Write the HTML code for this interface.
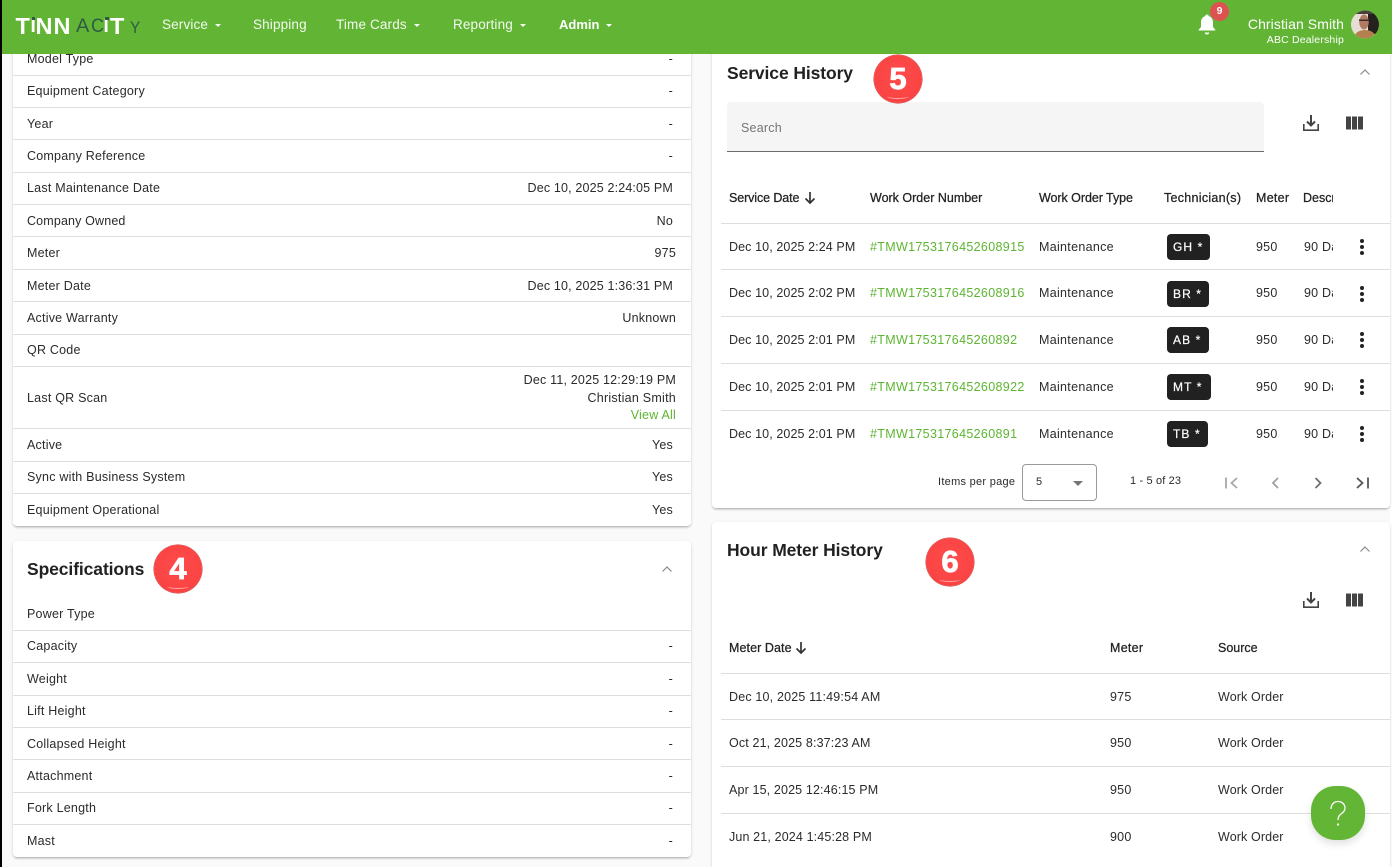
<!DOCTYPE html>
<html lang="en"><head><meta charset="utf-8"><title>Equipment</title>
<style>
*{box-sizing:border-box}
html,body{margin:0;padding:0;width:1392px;height:867px;overflow:hidden}
body{position:relative;background:#fafafa;font-family:"Liberation Sans",Arial,sans-serif;color:#2b2b2b;font-size:12.5px;letter-spacing:.22px}
.a,.t,.r{position:absolute}
.t,.r{white-space:nowrap;line-height:16px;height:16px}
.r{text-align:right}
.d{letter-spacing:.1px}
.e{letter-spacing:.16px}
.w{letter-spacing:.33px}
.m{letter-spacing:.3px}
.card{position:absolute;background:#fff;border-radius:4px;box-shadow:0 2px 2px -1px rgba(0,0,0,.25),0 1px 3px rgba(0,0,0,.12)}
.l{position:absolute;height:1px;background:#dedede}
.nav{position:absolute;top:16px;color:#fff;font-size:13.5px;line-height:17px;white-space:nowrap;letter-spacing:.15px;opacity:.93}
.nav i{display:inline-block;width:0;height:0;border:3px solid transparent;border-top:3px solid #fff;border-bottom:0;margin-left:7px;vertical-align:2px}
.h{font-size:17.5px;font-weight:bold;color:#212121;letter-spacing:-.1px;line-height:22px;height:22px;position:absolute;white-space:nowrap}
.b{color:#222;-webkit-text-stroke:.25px #222;letter-spacing:.28px}
.g{color:#5cb531}
.chip{position:absolute;left:1167px;height:26px;background:#212121;color:#fff;border-radius:4px;font-size:12px;letter-spacing:1.1px;line-height:27px;padding-left:6px;white-space:nowrap;-webkit-text-stroke:.2px #fff}
.dot{position:absolute;left:1359.5px;width:4px;height:4px;border-radius:50%;background:#222}
.num{position:absolute;width:48px;height:48px;border-radius:50%;background:radial-gradient(circle at 50% 45%,#ff4b4b 0,#fa4444 70%,#e83a3a 100%);box-shadow:0 0 0 .5px #c93434;color:#fff;font-weight:bold;font-size:31px;-webkit-text-stroke:.8px #fff;text-align:center;line-height:47px;letter-spacing:0}
.num:after{content:"";position:absolute;left:13px;bottom:4px;width:22px;height:4px;border-bottom:1.5px solid rgba(255,255,255,.55);border-radius:0 0 50% 50%}
.lg{position:absolute;height:24px;line-height:24px;white-space:nowrap;letter-spacing:0;color:#fff;font-weight:bold;font-size:23.5px}
.ld{color:#2f5a46;font-weight:normal;transform-origin:0 50%}
svg{position:absolute;display:block}
</style></head><body>

<!-- left black strip -->
<div class="a" style="left:0;top:0;width:2px;height:867px;background:#000"></div>
<div class="a" style="left:1390px;top:54px;width:2px;height:813px;background:#fff"></div>

<!-- Left details card -->
<div class="card" style="left:13px;top:40px;width:678px;height:486px"></div>
<div class="l" style="left:13px;top:75px;width:678px"></div>
<div class="l" style="left:13px;top:107px;width:678px"></div>
<div class="l" style="left:13px;top:139px;width:678px"></div>
<div class="l" style="left:13px;top:172px;width:678px"></div>
<div class="l" style="left:13px;top:204px;width:678px"></div>
<div class="l" style="left:13px;top:236px;width:678px"></div>
<div class="l" style="left:13px;top:269px;width:678px"></div>
<div class="l" style="left:13px;top:301px;width:678px"></div>
<div class="l" style="left:13px;top:334px;width:678px"></div>
<div class="l" style="left:13px;top:366px;width:678px"></div>
<div class="l" style="left:13px;top:428px;width:678px"></div>
<div class="l" style="left:13px;top:461px;width:678px"></div>
<div class="l" style="left:13px;top:493px;width:678px"></div>

<div class="t" style="left:27px;top:51px">Model Type</div><div class="r" style="right:719px;top:51px">-</div>
<div class="t" style="left:27px;top:83px">Equipment Category</div><div class="r" style="right:719px;top:83px">-</div>
<div class="t" style="left:27px;top:116px">Year</div><div class="r" style="right:719px;top:116px">-</div>
<div class="t" style="left:27px;top:148px">Company Reference</div><div class="r" style="right:719px;top:148px">-</div>
<div class="t" style="left:27px;top:180px">Last Maintenance Date</div><div class="r e" style="right:719px;top:180px">Dec 10, 2025 2:24:05 PM</div>
<div class="t" style="left:27px;top:213px;letter-spacing:.15px">Company Owned</div><div class="r" style="right:719px;top:213px">No</div>
<div class="t" style="left:27px;top:245px">Meter</div><div class="r" style="right:716px;top:245px">975</div>
<div class="t" style="left:27px;top:278px">Meter Date</div><div class="r e" style="right:719px;top:278px">Dec 10, 2025 1:36:31 PM</div>
<div class="t" style="left:27px;top:310px">Active Warranty</div><div class="r" style="right:716px;top:310px">Unknown</div>
<div class="t" style="left:27px;top:342px">QR Code</div>
<div class="t" style="left:27px;top:390px">Last QR Scan</div>
<div class="r" style="right:716px;top:372px;letter-spacing:.19px">Dec 11, 2025 12:29:19 PM</div>
<div class="r" style="right:716px;top:390px;letter-spacing:.25px">Christian Smith</div>
<div class="r g" style="right:716px;top:407px">View All</div>
<div class="t" style="left:27px;top:437px">Active</div><div class="r" style="right:719px;top:437px">Yes</div>
<div class="t" style="left:27px;top:469px">Sync with Business System</div><div class="r" style="right:719px;top:469px">Yes</div>
<div class="t" style="left:27px;top:502px">Equipment Operational</div><div class="r" style="right:719px;top:502px">Yes</div>

<!-- Specifications card -->
<div class="card" style="left:13px;top:541px;width:678px;height:316px"></div>
<div class="h" style="left:27px;top:558px">Specifications</div>
<div class="num" style="left:154px;top:545px">4</div>
<svg style="left:660px;top:562px" width="14" height="14" viewBox="0 0 14 14"><path d="M2.5 9.5 7 5l4.500 4.500" fill="none" stroke="#8a8a8a" stroke-width="1.200"/></svg>
<div class="l" style="left:13px;top:630px;width:678px"></div>
<div class="l" style="left:13px;top:662px;width:678px"></div>
<div class="l" style="left:13px;top:695px;width:678px"></div>
<div class="l" style="left:13px;top:727px;width:678px"></div>
<div class="l" style="left:13px;top:759px;width:678px"></div>
<div class="l" style="left:13px;top:792px;width:678px"></div>
<div class="l" style="left:13px;top:824px;width:678px"></div>
<div class="t" style="left:27px;top:606px">Power Type</div>
<div class="t" style="left:27px;top:638px">Capacity</div><div class="r" style="right:719px;top:638px">-</div>
<div class="t" style="left:27px;top:671px">Weight</div><div class="r" style="right:719px;top:671px">-</div>
<div class="t" style="left:27px;top:703px">Lift Height</div><div class="r" style="right:719px;top:703px">-</div>
<div class="t" style="left:27px;top:736px">Collapsed Height</div><div class="r" style="right:719px;top:736px">-</div>
<div class="t" style="left:27px;top:768px">Attachment</div><div class="r" style="right:719px;top:768px">-</div>
<div class="t" style="left:27px;top:800px">Fork Length</div><div class="r" style="right:719px;top:800px">-</div>
<div class="t" style="left:27px;top:833px">Mast</div><div class="r" style="right:719px;top:833px">-</div>

<!-- Service History card -->
<div class="card" style="left:712px;top:40px;width:678px;height:468px"></div>
<div class="h" style="left:727px;top:62px">Service History</div>
<div class="a" style="left:727px;top:102px;width:537px;height:50px;background:#f5f5f5;border-radius:4px 4px 0 0;border-bottom:1px solid #6b6b6b"></div>
<div class="num" style="left:874px;top:55px">5</div>
<svg style="left:1358px;top:65px" width="14" height="14" viewBox="0 0 14 14"><path d="M2.5 9.500 7 5l4.500 4.500" fill="none" stroke="#8a8a8a" stroke-width="1.200"/></svg>
<div class="t" style="left:741px;top:120px;color:#757575">Search</div>
<svg style="left:1301px;top:113px" width="20" height="20" viewBox="0 0 20 20"><path d="M10 2v10.500M6 8.500l4 4 4-4" fill="none" stroke="#444" stroke-width="2"/><path d="M2.800 11v6.200h14.400V11" fill="none" stroke="#444" stroke-width="1.600"/></svg>
<svg style="left:1346px;top:116px" width="17" height="14" viewBox="0 0 17 14"><path d="M0 .5h5v13H0zM6 .5h5v13H6zM12 .5h5v13h-5z" fill="#444"/></svg>

<div class="t b" style="left:729px;top:190px;letter-spacing:-.1px">Service Date</div>
<svg style="left:803px;top:190px" width="14" height="16" viewBox="0 0 14 16"><path d="M7 2v11M2.500 8.500 7 13l4.500-4.500" fill="none" stroke="#333" stroke-width="1.700"/></svg>
<div class="t b" style="left:870px;top:190px;letter-spacing:0">Work Order Number</div>
<div class="t b" style="left:1039px;top:190px;letter-spacing:-.05px">Work Order Type</div>
<div class="t b" style="left:1164px;top:190px">Technician(s)</div>
<div class="t b" style="left:1256px;top:190px">Meter</div>
<div class="t b" style="left:1303px;top:190px;width:30px;overflow:hidden;letter-spacing:0">Description</div>
<div class="l" style="left:721px;top:223px;width:669px"></div>
<div class="l" style="left:721px;top:269px;width:669px"></div>
<div class="l" style="left:721px;top:316px;width:669px"></div>
<div class="l" style="left:721px;top:363px;width:669px"></div>
<div class="l" style="left:721px;top:410px;width:669px"></div>

<div class="t d" style="left:729px;top:239px">Dec 10, 2025 2:24 PM</div><div class="t g w" style="left:870px;top:239px">#TMW1753176452608915</div><div class="t m" style="left:1039px;top:239px">Maintenance</div><div class="chip" style="top:234px;width:43px">GH *</div><div class="t" style="left:1256px;top:239px">950</div><div class="t" style="left:1304px;top:239px;width:29px;overflow:hidden">90 Day</div>
<div class="t d" style="left:729px;top:285px">Dec 10, 2025 2:02 PM</div><div class="t g w" style="left:870px;top:285px">#TMW1753176452608916</div><div class="t m" style="left:1039px;top:285px">Maintenance</div><div class="chip" style="top:281px;width:42px">BR *</div><div class="t" style="left:1256px;top:285px">950</div><div class="t" style="left:1304px;top:285px;width:29px;overflow:hidden">90 Day</div>
<div class="t d" style="left:729px;top:332px">Dec 10, 2025 2:01 PM</div><div class="t g w" style="left:870px;top:332px">#TMW175317645260892</div><div class="t m" style="left:1039px;top:332px">Maintenance</div><div class="chip" style="top:327px;width:42px">AB *</div><div class="t" style="left:1256px;top:332px">950</div><div class="t" style="left:1304px;top:332px;width:29px;overflow:hidden">90 Day</div>
<div class="t d" style="left:729px;top:379px">Dec 10, 2025 2:01 PM</div><div class="t g w" style="left:870px;top:379px">#TMW1753176452608922</div><div class="t m" style="left:1039px;top:379px">Maintenance</div><div class="chip" style="top:374px;width:44px">MT *</div><div class="t" style="left:1256px;top:379px">950</div><div class="t" style="left:1304px;top:379px;width:29px;overflow:hidden">90 Day</div>
<div class="t d" style="left:729px;top:426px">Dec 10, 2025 2:01 PM</div><div class="t g w" style="left:870px;top:426px">#TMW175317645260891</div><div class="t m" style="left:1039px;top:426px">Maintenance</div><div class="chip" style="top:421px;width:41px">TB *</div><div class="t" style="left:1256px;top:426px">950</div><div class="t" style="left:1304px;top:426px;width:29px;overflow:hidden">90 Day</div>

<div class="dot" style="top:239px"></div><div class="dot" style="top:245px"></div><div class="dot" style="top:250.500px"></div>
<div class="dot" style="top:286px"></div><div class="dot" style="top:292px"></div><div class="dot" style="top:297.500px"></div>
<div class="dot" style="top:332px"></div><div class="dot" style="top:338px"></div><div class="dot" style="top:343.500px"></div>
<div class="dot" style="top:379px"></div><div class="dot" style="top:385px"></div><div class="dot" style="top:390.500px"></div>
<div class="dot" style="top:426px"></div><div class="dot" style="top:432px"></div><div class="dot" style="top:437.500px"></div>

<div class="t" style="left:938px;top:474px;font-size:11px;letter-spacing:.28px">Items per page</div>
<div class="a" style="left:1022px;top:464px;width:75px;height:37px;border:1px solid #9a9a9a;border-radius:4px"></div>
<div class="t" style="left:1036px;top:474px;font-size:11px">5</div>
<div class="a" style="left:1073px;top:481px;width:0;height:0;border:5px solid transparent;border-top:5px solid #757575;border-bottom:0"></div>
<div class="t" style="left:1130px;top:473px;font-size:11px;letter-spacing:.15px">1 - 5 of 23</div>
<svg style="left:1224px;top:475px" width="16" height="16" viewBox="0 0 16 16"><path d="M2 2.500v11M13 3 7.500 8l5.500 5" fill="none" stroke="#a8a8a8" stroke-width="1.800"/></svg>
<svg style="left:1267px;top:475px" width="16" height="16" viewBox="0 0 16 16"><path d="M11 3 6 8l5 5" fill="none" stroke="#a0a0a0" stroke-width="1.800"/></svg>
<svg style="left:1310px;top:475px" width="16" height="16" viewBox="0 0 16 16"><path d="M5.500 3l5 5-5 5" fill="none" stroke="#707070" stroke-width="1.800"/></svg>
<svg style="left:1354px;top:475px" width="16" height="16" viewBox="0 0 16 16"><path d="M14 2.500v11M3 3l5.500 5L3 13" fill="none" stroke="#555" stroke-width="1.800"/></svg>

<!-- Hour Meter History card -->
<div class="card" style="left:712px;top:522px;width:678px;height:345px;border-radius:4px 4px 0 0"></div>
<div class="h" style="left:727px;top:539px">Hour Meter History</div>
<div class="num" style="left:926px;top:538px">6</div>
<svg style="left:1358px;top:542px" width="14" height="14" viewBox="0 0 14 14"><path d="M2.500 9.500 7 5l4.500 4.500" fill="none" stroke="#8a8a8a" stroke-width="1.200"/></svg>
<svg style="left:1301px;top:590px" width="20" height="20" viewBox="0 0 20 20"><path d="M10 2v10.500M6 8.500l4 4 4-4" fill="none" stroke="#444" stroke-width="2"/><path d="M2.800 11v6.200h14.400V11" fill="none" stroke="#444" stroke-width="1.600"/></svg>
<svg style="left:1346px;top:593px" width="17" height="14" viewBox="0 0 17 14"><path d="M0 .5h5v13H0zM6 .5h5v13H6zM12 .5h5v13h-5z" fill="#444"/></svg>
<div class="t b" style="left:729px;top:640px;letter-spacing:.08px">Meter Date</div>
<svg style="left:794px;top:640px" width="14" height="16" viewBox="0 0 14 16"><path d="M7 2v11M2.500 8.500 7 13l4.500-4.500" fill="none" stroke="#333" stroke-width="1.700"/></svg>
<div class="t b" style="left:1110px;top:640px">Meter</div>
<div class="t b" style="left:1218px;top:640px;letter-spacing:0">Source</div>
<div class="l" style="left:721px;top:673px;width:669px"></div>
<div class="l" style="left:721px;top:719px;width:669px"></div>
<div class="l" style="left:721px;top:766px;width:669px"></div>
<div class="l" style="left:721px;top:813px;width:669px"></div>
<div class="t" style="left:729px;top:689px;letter-spacing:.18px">Dec 10, 2025 11:49:54 AM</div><div class="t" style="left:1110px;top:689px">975</div><div class="t" style="left:1218px;top:689px;letter-spacing:.12px">Work Order</div>
<div class="t" style="left:729px;top:735px;letter-spacing:.14px">Oct 21, 2025 8:37:23 AM</div><div class="t" style="left:1110px;top:735px">950</div><div class="t" style="left:1218px;top:735px;letter-spacing:.12px">Work Order</div>
<div class="t" style="left:729px;top:782px;letter-spacing:.14px">Apr 15, 2025 12:46:15 PM</div><div class="t" style="left:1110px;top:782px">950</div><div class="t" style="left:1218px;top:782px;letter-spacing:.12px">Work Order</div>
<div class="t" style="left:729px;top:829px;letter-spacing:.14px">Jun 21, 2024 1:45:28 PM</div><div class="t" style="left:1110px;top:829px">900</div><div class="t" style="left:1218px;top:829px;letter-spacing:.12px">Work Order</div>

<!-- FAB -->
<div class="a" style="left:1311px;top:786px;width:54px;height:54px;background:#63b535;border-radius:45%;box-shadow:0 4px 8px rgba(0,0,0,.12)"></div>
<svg style="left:1311px;top:786px" width="54" height="54" viewBox="0 0 54 54"><path d="M20 23c0-4.500 3-7.500 7-7.500s7 2.800 7 6.500c0 3-2 4.500-4 6-2 1.500-3 3-3 6" fill="none" stroke="#fff" stroke-width="1.300"/><circle cx="27" cy="38.500" r="1.100" fill="#fff"/></svg>

<!-- Header -->
<div class="a" style="left:2px;top:0;width:1390px;height:54px;background:#62b534"></div>
<div class="lg" style="left:15.500px;top:14px">T</div>
<div class="lg" style="left:30.500px;top:15.400px;font-size:19px">I</div>
<div class="a" style="left:32px;top:17px;width:3px;height:3px;background:#2f5a46"></div>
<div class="lg" style="left:35.500px;top:14px">N</div>
<div class="lg" style="left:53.500px;top:14px">N</div>
<div class="lg ld" style="left:76px;top:15.400px;font-size:19px;transform:scaleX(1.050)">A</div>
<div class="lg ld" style="left:91px;top:15.400px;font-size:19px;transform:scaleX(.950)">C</div>
<div class="lg" style="left:103.500px;top:15.400px;font-size:19px">I</div>
<div class="a" style="left:105px;top:17px;width:3.500px;height:3px;background:#2f5a46"></div>
<div class="lg" style="left:110px;top:14px">T</div>
<div class="lg ld" style="left:129.500px;top:16.100px;font-size:17px;transform:scaleX(.900)">Y</div>
<div class="nav" style="left:162px">Service<i></i></div>
<div class="nav" style="left:253px">Shipping</div>
<div class="nav" style="left:336px">Time Cards<i></i></div>
<div class="nav" style="left:453px">Reporting<i></i></div>
<div class="nav" style="left:559px;font-weight:bold;opacity:1;font-size:13px;letter-spacing:0">Admin<i></i></div>
<svg style="left:1197px;top:14px" width="20" height="22" viewBox="0 0 20 22"><path d="M10 .5c1 0 1.700.7 1.700 1.600 3 .8 4.300 3.400 4.300 6.400v4.500l2.300 2.700v.8H1.700v-.8L4 13V8.500c0-3 1.300-5.600 4.300-6.400C8.300 1.200 9 .5 10 .5zM7.800 18.500h4.400c0 1.200-1 2-2.200 2s-2.200-.8-2.200-2z" fill="#fff"/></svg>
<div class="a" style="left:1210px;top:2px;width:19px;height:19px;border-radius:50%;background:#de5252;color:#fff;font-size:10.5px;font-weight:bold;text-align:center;line-height:19px;letter-spacing:0">9</div>
<div class="r" style="right:48px;top:16px;color:#fff;font-size:14px;letter-spacing:.08px">Christian Smith</div>
<div class="r" style="right:48px;top:32px;color:#fff;font-size:10.500px;letter-spacing:.18px">ABC Dealership</div>
<svg style="left:1351px;top:10px" width="28" height="29" viewBox="0 0 28 29"><defs><clipPath id="c"><circle cx="14" cy="14.500" r="14"/></clipPath></defs><g clip-path="url(#c)"><rect width="28" height="29" fill="#e6ddd4"/><rect x="17" width="11" height="24" fill="#25211f"/><rect x="3" y="0" width="20" height="4" fill="#4a403a"/><path d="M3 29c0-6 5-9 11-9s11 3 11 9z" fill="#b5804e"/><ellipse cx="13" cy="12" rx="4.800" ry="7.500" fill="#b07b62"/><rect x="8" y="9.500" width="10" height="1.500" fill="#3a2e2a"/></g></svg>

</body></html>
